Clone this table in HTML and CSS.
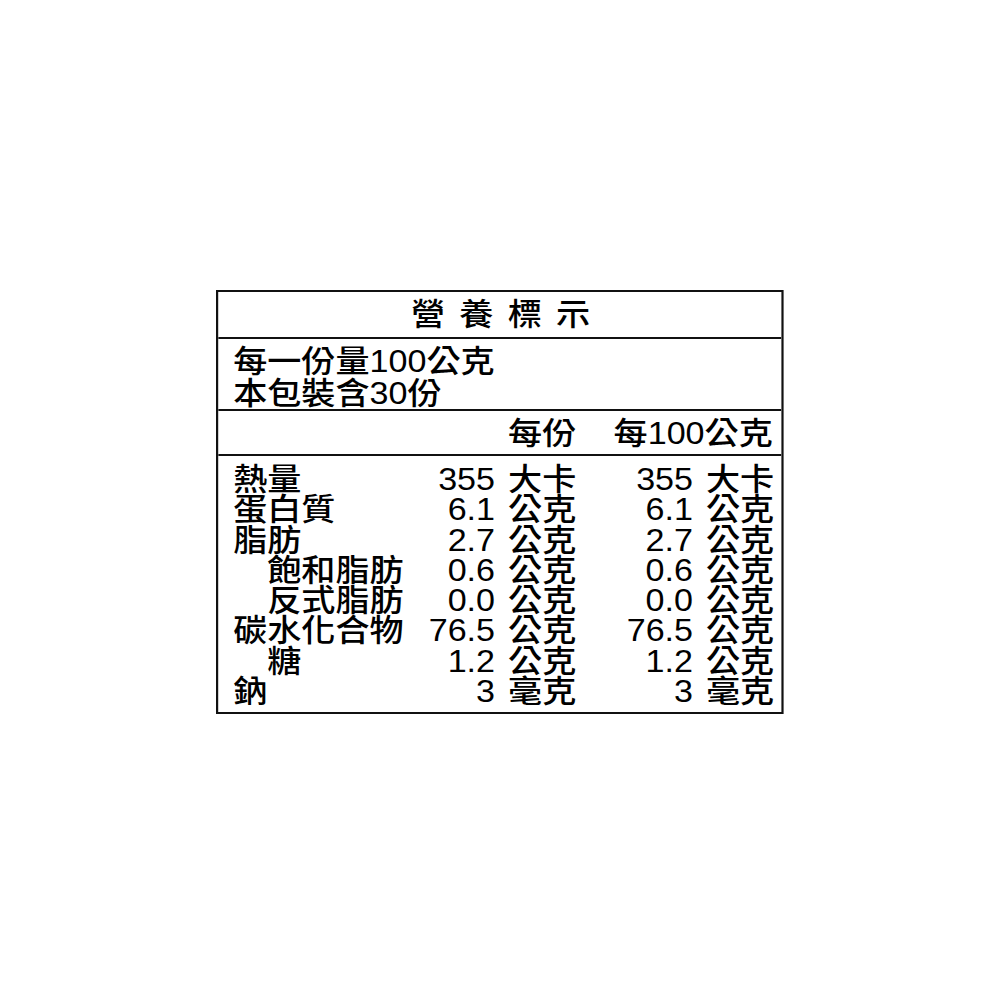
FILE: index.html
```html
<!DOCTYPE html>
<html lang="zh-Hant">
<head>
<meta charset="utf-8">
<title>營養標示</title>
<link rel="stylesheet" href="styles.css">
</head>
<body>
<div class="page">
  <div class="label">
    <div class="title">營養標示</div>
    <div class="serving">
      <div>每一份量100公克</div>
      <div>本包裝含30份</div>
    </div>
    <div class="grid head">
      <span></span>
      <span></span>
      <span class="unit">每份</span>
      <span class="per100">每100公克</span>
    </div>
    <div class="grid data">
      <span class="name">熱量</span><span class="num">355</span><span class="unit">大卡</span><span class="num">355</span><span class="unit">大卡</span>
      <span class="name">蛋白質</span><span class="num">6.1</span><span class="unit">公克</span><span class="num">6.1</span><span class="unit">公克</span>
      <span class="name">脂肪</span><span class="num">2.7</span><span class="unit">公克</span><span class="num">2.7</span><span class="unit">公克</span>
      <span class="name sub">飽和脂肪</span><span class="num">0.6</span><span class="unit">公克</span><span class="num">0.6</span><span class="unit">公克</span>
      <span class="name sub">反式脂肪</span><span class="num">0.0</span><span class="unit">公克</span><span class="num">0.0</span><span class="unit">公克</span>
      <span class="name">碳水化合物</span><span class="num">76.5</span><span class="unit">公克</span><span class="num">76.5</span><span class="unit">公克</span>
      <span class="name sub">糖</span><span class="num">1.2</span><span class="unit">公克</span><span class="num">1.2</span><span class="unit">公克</span>
      <span class="name">鈉</span><span class="num">3</span><span class="unit">毫克</span><span class="num">3</span><span class="unit">毫克</span>
    </div>
  </div>
</div>
</body>
</html>
```

FILE: styles.css
```css
html, body {
  margin: 0;
  padding: 0;
  background: #ffffff;
}

body {
  font-family: "Liberation Sans", "Noto Sans CJK TC", sans-serif;
  color: #000000;
  font-size: 31px;
  font-weight: 500;
}

.page {
  padding: 290px 0 0 216px;
}

/* The printed label is slightly wide-set: lay it out at 516px and stretch to 568px */
.label {
  box-sizing: border-box;
  width: 516.4px;
  height: 424px;
  border: 2px solid #111;
  display: flex;
  flex-direction: column;
  overflow: hidden;
  transform: scaleX(1.1);
  transform-origin: 0 0;
}

.title {
  flex: 0 0 auto;
  box-sizing: border-box;
  height: 47px;
  border-bottom: 2px solid #111;
  display: flex;
  align-items: center;
  justify-content: center;
  letter-spacing: 13px;
  padding-left: 14px;
  padding-top: 1px;
  line-height: 34px;
  white-space: nowrap;
}

.serving {
  flex: 0 0 auto;
  height: 72px;
  box-sizing: border-box;
  border-bottom: 2px solid #111;
  padding: 7px 0 0 13.6px;
  line-height: 31.5px;
  white-space: nowrap;
}

.grid {
  display: grid;
  grid-template-columns: 163.6px 74.5px 73.6px 106.4px 74.5px;
  padding-left: 13.6px;
  white-space: nowrap;
}

.head {
  flex: 0 0 auto;
  height: 45px;
  box-sizing: border-box;
  border-bottom: 2px solid #111;
  align-items: center;
  line-height: 34px;
  padding-top: 3px;
}

.per100 {
  grid-column: 4 / 6;
  text-align: right;
  padding-right: 2px;
}

.data {
  flex: 1 1 auto;
  padding-top: 9px;
  line-height: 30.3px;
  align-content: start;
}

.num {
  text-align: right;
}

.unit {
  padding-left: 11.8px;
}

.name.sub {
  padding-left: 31px;
}
```
